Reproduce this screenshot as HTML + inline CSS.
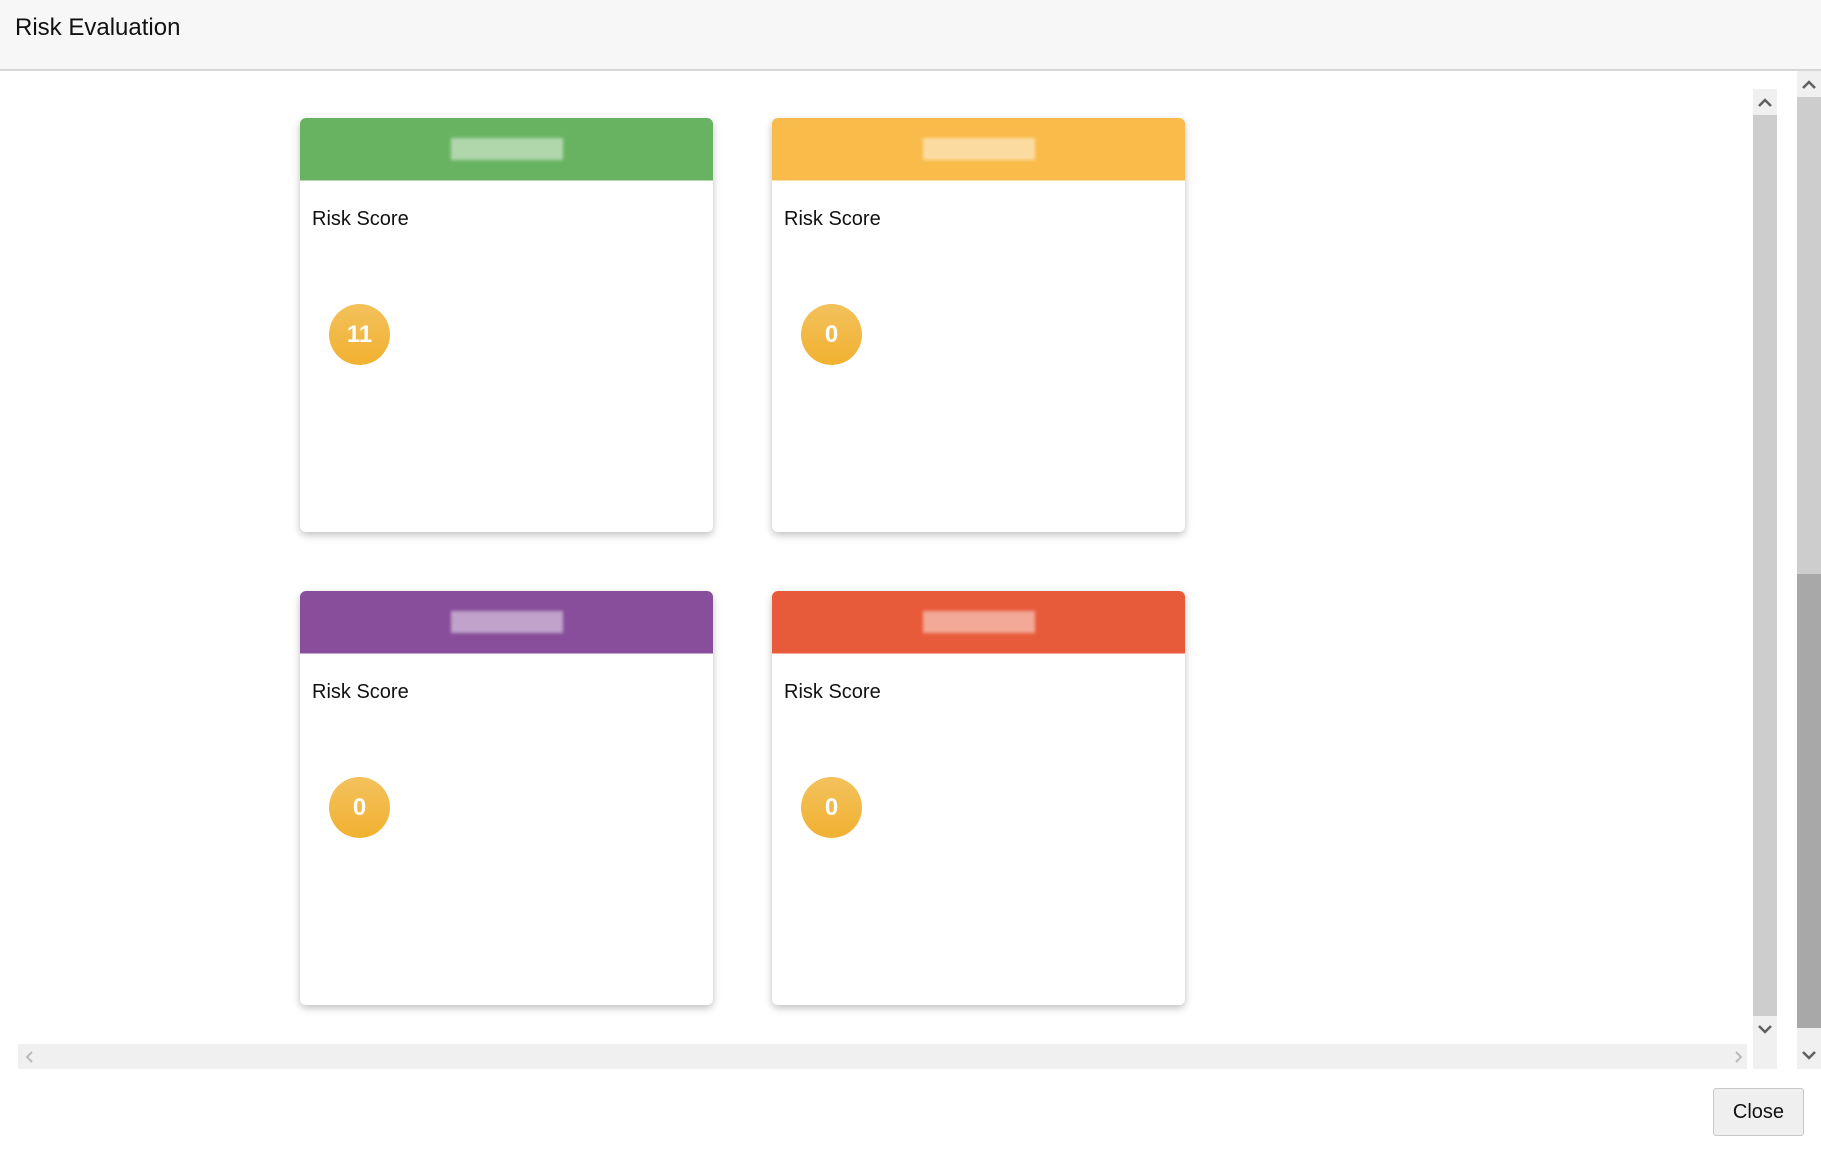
<!DOCTYPE html>
<html><head><meta charset="utf-8"><style>
*{margin:0;padding:0;box-sizing:border-box}
body{width:1821px;height:1159px;background:#fff;font-family:"Segoe UI","Liberation Sans",sans-serif;position:relative;overflow:hidden;color:#111}
.hdr{position:absolute;left:0;top:0;width:1821px;height:71px;background:#f7f7f7;border-bottom:2px solid #d6d6d6}
.hdr span{position:absolute;left:15px;top:14px;font-size:24px}
.card{position:absolute;width:413px;height:414px;background:#fff;border-radius:6px;box-shadow:0 3px 8px rgba(0,0,0,.25);overflow:hidden}
.card .top{height:63px;border-bottom:1px solid rgba(255,255,255,.5);display:flex;align-items:center;justify-content:center}
.card .top i{display:block;width:112px;height:22px;background:rgba(255,255,255,.6);filter:blur(1.5px);opacity:.8}
.card .rs{position:absolute;left:12px;top:90px;font-size:20px}
.card .c{position:absolute;left:29px;top:186px;width:61px;height:61px;border-radius:50%;background:linear-gradient(#f3c15c,#f1b131);color:#fff;font-weight:bold;font-size:24px;display:flex;align-items:center;justify-content:center;font-family:"Liberation Sans",sans-serif}
.sb{position:absolute;background:#f0f0f0}
.arr{position:absolute;display:flex;align-items:center;justify-content:center}
</style></head><body>
<div class="hdr"><span>Risk Evaluation</span></div>

<div class="card" style="left:300px;top:118px"><div class="top" style="background:#68b361"><i></i></div><div class="rs">Risk Score</div><div class="c">11</div></div>
<div class="card" style="left:772px;top:118px"><div class="top" style="background:#f9bb4a"><i></i></div><div class="rs">Risk Score</div><div class="c">0</div></div>
<div class="card" style="left:300px;top:591px"><div class="top" style="background:#884e9b"><i></i></div><div class="rs">Risk Score</div><div class="c">0</div></div>
<div class="card" style="left:772px;top:591px"><div class="top" style="background:#e85b3a"><i></i></div><div class="rs">Risk Score</div><div class="c">0</div></div>

<!-- horizontal scrollbar -->
<div class="sb" style="left:18px;top:1044px;width:1729px;height:25px"></div>
<div class="arr" style="left:20px;top:1044px;width:20px;height:25px"><svg width="10" height="12"><path d="M7 1L2 6L7 11" stroke="#bbb" stroke-width="2" fill="none"/></svg></div>
<div class="arr" style="left:1728px;top:1044px;width:20px;height:25px"><svg width="10" height="12"><path d="M3 1L8 6L3 11" stroke="#bbb" stroke-width="2" fill="none"/></svg></div>

<!-- inner vertical scrollbar -->
<div class="sb" style="left:1753px;top:89px;width:24px;height:980px"></div>
<div style="position:absolute;left:1753px;top:115px;width:24px;height:901px;background:#cdcdcd"></div>
<div class="arr" style="left:1753px;top:89px;width:24px;height:26px"><svg width="14" height="9"><path d="M1 8L7 2L13 8" stroke="#606060" stroke-width="2.5" fill="none"/></svg></div>
<div class="arr" style="left:1753px;top:1016px;width:24px;height:27px"><svg width="14" height="9"><path d="M1 1L7 7L13 1" stroke="#606060" stroke-width="2.5" fill="none"/></svg></div>

<!-- outer vertical scrollbar -->
<div class="sb" style="left:1797px;top:71px;width:24px;height:998px"></div>
<div style="position:absolute;left:1797px;top:97px;width:24px;height:477px;background:#cdcdcd"></div>
<div style="position:absolute;left:1797px;top:574px;width:24px;height:454px;background:#a8a8a8"></div>
<div class="arr" style="left:1797px;top:71px;width:24px;height:26px"><svg width="14" height="9"><path d="M1 8L7 2L13 8" stroke="#606060" stroke-width="2.5" fill="none"/></svg></div>
<div class="arr" style="left:1797px;top:1042px;width:24px;height:27px"><svg width="14" height="9"><path d="M1 1L7 7L13 1" stroke="#606060" stroke-width="2.5" fill="none"/></svg></div>

<div style="position:absolute;left:1713px;top:1088px;width:91px;height:48px;background:#efefef;border:1px solid #c8c8c8;border-radius:3px;font-size:20px;display:flex;align-items:center;justify-content:center">Close</div>
</body></html>
